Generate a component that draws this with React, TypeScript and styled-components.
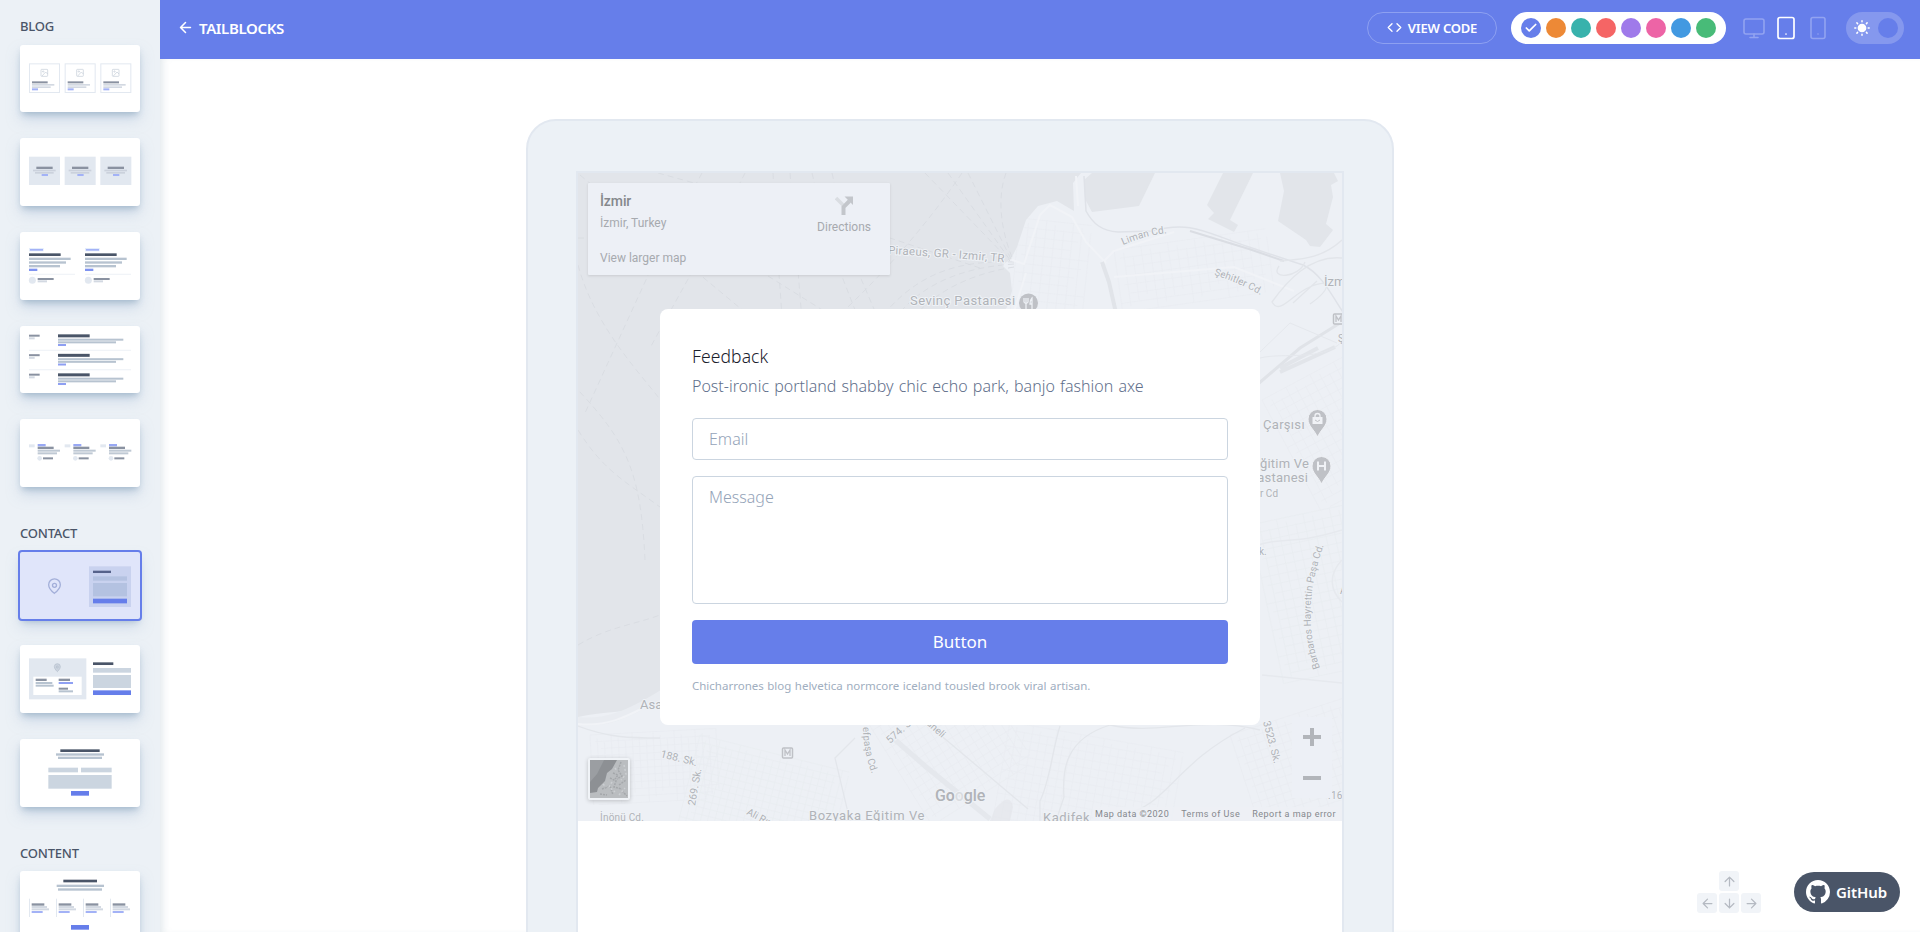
import React from 'react';
import styled, { createGlobalStyle } from 'styled-components';

const GlobalStyle = createGlobalStyle`
  *, *::before, *::after { box-sizing: border-box; }
  body {
    margin: 0;
    height: 932px;
    overflow: hidden;
    background: #fff;
    font-family: "Noto Sans", "Open Sans", sans-serif;
  }
  svg { display: block; }
`;

const DARK = '#4a5568';
const GRAY = '#8a92a1';
const LIGHT = '#b7c3d0';
const PALE = '#d3d9e2';
const FIELD = '#cbd5e0';
const BOX = '#e2e8f0';
const LINE = '#f1f4f8';
const MAIN = '#667eea';
const MAIN_SOFT = '#a3b2f6';

const Page = styled.div`
  display: flex;
  height: 932px;
  overflow: hidden;
`;

/* ---------- sidebar ---------- */

const Sidebar = styled.aside`
  flex: 0 0 160px;
  height: 932px;
  padding: 16.2px 20px 0;
  background: #ecf1f6;
  overflow: hidden;
`;

const Group = styled.section`
  & + & {
    padding-top: 10px;
  }
`;

const GroupTitle = styled.h2`
  margin: 0 0 8.5px;
  font-size: 13px;
  line-height: 20px;
  font-weight: 500;
  letter-spacing: -0.2px;
  color: ${DARK};
`;

const BlockButton = styled.button<{ $active?: boolean }>`
  display: block;
  width: 120px;
  height: 67.7px;
  margin: 0 0 26px;
  padding: 0;
  border: 0;
  border-radius: ${p => (p.$active ? '2px' : '3px')};
  background: ${p => (p.$active ? '#e0e5fa' : '#fff')};
  box-shadow: ${p => (p.$active ? `0 0 0 2px ${MAIN}, ` : '')}0 4px 6px -2px rgba(100, 135, 160, 0.42),
    0 8px 14px -1px rgba(170, 190, 218, 0.5);
`;

type Bar = [number, number, number, number, string];

function Bars({ items, dx = 0, dy = 0 }: { items: Bar[]; dx?: number; dy?: number }) {
  return (
    <g transform={`translate(${dx} ${dy})`}>
      {items.map(([x, y, w, h, fill], i) => (
        <rect key={i} x={x} y={y} width={w} height={h} fill={fill} />
      ))}
    </g>
  );
}

function Thumb({ children }: { children: React.ReactNode }) {
  return <svg width="120" height="67.7" viewBox="0 0 360 203">{children}</svg>;
}

const COLS = [27, 134, 241];

const BlogA = () => (
  <Thumb>
    {COLS.map(x => (
      <g key={x}>
        <rect x={x + 1.5} y="56.5" width="90" height="86" fill="none" stroke={BOX} strokeWidth="3" />
        <g transform={`translate(${x + 36} 73)`} fill="none" stroke="#c3ccd7" strokeWidth="2">
          <rect width="20" height="21" rx="2" />
          <circle cx="6.5" cy="6.5" r="2" />
          <path d="M20 14l-6-6L3 20" />
        </g>
        <Bars dx={x} items={[[9, 109, 47, 6, GRAY], [9, 117, 67, 5, PALE], [9, 124, 56, 5, PALE], [9, 130, 18, 6, MAIN_SOFT]]} />
      </g>
    ))}
  </Thumb>
);

const BlogB = () => (
  <Thumb>
    {COLS.map(x => (
      <Bars
        key={x}
        dx={x}
        items={[[0, 56, 93, 85, BOX], [22, 86, 49, 7, GRAY], [12, 95, 68, 5, '#cbd1dc'], [18, 102, 56, 5, '#cbd1dc'], [38, 108, 19, 6, MAIN_SOFT]]}
      />
    ))}
  </Thumb>
);

const BlogC = () => (
  <Thumb>
    {[27, 195].map(x => (
      <g key={x}>
        <Bars
          dx={x}
          items={[
            [0, 48, 44, 10, '#e3ecfb'], [3, 51, 39, 5, MAIN_SOFT], [0, 64, 95, 8, DARK],
            [0, 77, 125, 7, LIGHT], [0, 88, 111, 7, LIGHT], [0, 99, 93, 7, LIGHT],
            [0, 110, 25, 7, '#7f93f0'], [0, 125, 138, 4, LINE], [26, 138, 48, 6, GRAY], [26, 145, 28, 6, PALE],
          ]}
        />
        <circle cx={x + 10} cy="145" r="10.5" fill={BOX} />
      </g>
    ))}
  </Thumb>
);

const BlogD = () => (
  <Thumb>
    {[0, 58.5, 117].map(y => (
      <Bars
        key={y}
        dy={y}
        items={[
          [27, 26, 32, 6, GRAY], [27, 34, 17, 6, PALE], [114, 25, 95, 9, DARK],
          [114, 38, 196, 6, LIGHT], [114, 46, 174, 6, LIGHT], [114, 54, 24, 6, '#8e9ff2'],
        ]}
      />
    ))}
    <Bars items={[[27, 71, 306, 4, LINE], [27, 129, 306, 4, LINE]]} />
  </Thumb>
);

const BlogE = () => (
  <Thumb>
    {COLS.map(x => (
      <g key={x}>
        <Bars
          dx={x}
          items={[
            [0, 76, 17, 9, BOX], [26, 75, 24, 7, '#98a8f4'], [26, 83, 48, 7, GRAY],
            [26, 92, 67, 6, '#bfc9d4'], [26, 100, 58, 6, '#bfc9d4'], [42, 115, 30, 6, GRAY],
          ]}
        />
        <circle cx={x + 32} cy="118" r="7" fill={BOX} />
      </g>
    ))}
  </Thumb>
);

const ContactA = () => (
  <Thumb>
    <g fill="none" stroke="#a3afd9" strokeWidth="4">
      <path d="M121 98c0 12-18 26-18 26S86 110 86 98a17.500 17.500 0 0 1 35 0z" />
      <circle cx="103.500" cy="100" r="6" />
    </g>
    <Bars items={[[207, 43, 126, 122, '#c9d2ef'], [219, 56, 54, 7, '#56628a'], [219, 73, 102, 13, '#b4c2e1'], [219, 93, 102, 40, '#b4c2e1'], [219, 140, 102, 14, MAIN]]} />
  </Thumb>
);

const ContactB = () => (
  <Thumb>
    <Bars items={[[27, 40, 172, 123, BOX], [40, 95, 145, 55, '#fff']]} />
    <path d="M121 65c0 7-9 15-9 15s-9-8-9-15a9 9 0 0 1 18 0z" fill="#ccd4df" stroke="#b3becb" strokeWidth="2" />
    <circle cx="112" cy="66" r="3" fill="none" stroke="#aab6c4" strokeWidth="1.500" />
    <Bars
      items={[
        [47, 101, 33, 7, GRAY], [47, 111, 50, 6, LIGHT], [47, 119, 54, 6, LIGHT],
        [116, 101, 34, 7, GRAY], [116, 111, 43, 6, '#8fa0f3'], [116, 128, 28, 6, GRAY], [116, 136, 43, 6, LIGHT],
        [219, 52, 61, 8, DARK], [219, 69, 114, 14, FIELD], [219, 90, 114, 39, FIELD], [219, 136, 114, 14, MAIN],
      ]}
    />
  </Thumb>
);

const ContactC = () => (
  <Thumb>
    <Bars
      items={[
        [121, 31, 118, 8, DARK], [108, 43, 144, 7, LIGHT], [114, 53, 132, 7, LIGHT],
        [85, 86, 89, 14, FIELD], [183, 86, 92, 14, FIELD], [85, 108, 190, 41, FIELD], [153, 156, 54, 14, MAIN],
      ]}
    />
  </Thumb>
);

const ContentA = () => (
  <Thumb>
    <Bars items={[[130, 26, 101, 8, DARK], [110, 41, 142, 7, LIGHT], [114, 52, 132, 7, LIGHT]]} />
    {[27, 108, 189, 270].map(x => (
      <Bars
        key={x}
        dx={x}
        items={[[0, 83, 3, 55, BOX], [8, 97, 38, 7, GRAY], [8, 105, 46, 6, PALE], [8, 112, 52, 6, PALE], [8, 120, 33, 6, MAIN_SOFT]]}
      />
    ))}
    <Bars items={[[153, 162, 54, 14, MAIN]]} />
  </Thumb>
);

const groups = [
  { title: 'BLOG', blocks: [BlogA, BlogB, BlogC, BlogD, BlogE] },
  { title: 'CONTACT', blocks: [ContactA, ContactB, ContactC] },
  { title: 'CONTENT', blocks: [ContentA] },
];

/* ---------- toolbar ---------- */

const Main = styled.div`
  flex: 1;
  min-width: 0;
  display: flex;
  flex-direction: column;
`;

const Toolbar = styled.header`
  display: flex;
  align-items: center;
  flex: 0 0 59px;
  padding: 0 16px 4px 17px;
  background: ${MAIN};
  color: #fff;
`;

const Brand = styled.button`
  display: flex;
  align-items: center;
  gap: 5px;
  margin-right: auto;
  padding: 0;
  border: 0;
  background: none;
  color: #fff;
  font: 600 15px/20px "Noto Sans", sans-serif;
  letter-spacing: -0.35px;
`;

const CodeButton = styled.button`
  display: flex;
  align-items: center;
  justify-content: center;
  gap: 6px;
  width: 130px;
  height: 32px;
  margin-right: 14px;
  padding: 0;
  border: 1px solid #8da0f1;
  border-radius: 17px;
  background: none;
  color: #fff;
  font: 600 13px/20px "Noto Sans", sans-serif;
  letter-spacing: -0.2px;
`;

const Palette = styled.div`
  display: flex;
  align-items: center;
  justify-content: center;
  gap: 5px;
  width: 215px;
  height: 32px;
  margin-right: 16px;
  border-radius: 17px;
  background: #fff;
`;

const Swatch = styled.button<{ $color: string }>`
  display: grid;
  place-items: center;
  width: 20px;
  height: 20px;
  padding: 0;
  border: 0;
  border-radius: 50%;
  background: ${p => p.$color};
`;

const Devices = styled.div`
  display: flex;
  align-items: center;
  margin-right: 16px;
`;

const DeviceButton = styled.button<{ $active?: boolean; $gap?: number }>`
  display: block;
  margin: 0 0 0 ${p => p.$gap || 0}px;
  padding: 0;
  border: 0;
  background: none;
  color: ${p => (p.$active ? '#fff' : '#92a3f1')};
`;

const ModeSwitch = styled.button`
  display: flex;
  align-items: center;
  justify-content: space-between;
  width: 58px;
  height: 32px;
  padding: 0 6.5px 0 8px;
  border: 0;
  border-radius: 17px;
  background: #8598ee;
`;

const Knob = styled.span`
  width: 20px;
  height: 20px;
  border-radius: 50%;
  background: ${MAIN};
`;

const colors = [MAIN, '#ed8936', '#38b2ac', '#f56565', '#9f7aea', '#ed64a6', '#4299e1', '#48bb78'];

/* ---------- tablet preview ---------- */

const Stage = styled.main`
  flex: 1;
  min-height: 0;
  display: flex;
  justify-content: center;
  align-items: flex-start;
  padding: 60px 0 0;
  overflow: hidden;
  box-shadow: inset 7px 0 8px -5px rgba(95, 130, 150, 0.2);
`;

/* the frame sits on the window centre, so it is pulled back by half the sidebar */
const Tablet = styled.div`
  flex: none;
  width: 868px;
  height: 1100px;
  margin-right: 160px;
  padding: 50px 48px;
  border: 2px solid ${BOX};
  border-radius: 30px;
  background: #ecf1f6;
`;

const Screen = styled.div`
  height: 1000px;
  border: 2px solid ${BOX};
  background: #fff;
`;

const MapSection = styled.section`
  position: relative;
  display: flex;
  justify-content: center;
  align-items: flex-start;
  height: 648px;
  padding-top: 136px;
  background: #edf0f5;
  overflow: hidden;
`;

const MapLayer = styled.div`
  position: absolute;
  inset: 0;

  text {
    font-family: Roboto, sans-serif;
    fill: #b0b3b8;
    stroke: #eff2f6;
    stroke-width: 2px;
    paint-order: stroke;
  }
`;

const PlaceCard = styled.div`
  position: absolute;
  top: 10px;
  left: 10px;
  display: flex;
  justify-content: space-between;
  width: 302px;
  height: 92px;
  padding: 9px 19px 0 12px;
  border-radius: 1px;
  background: #edf0f6;
  box-shadow: 0 1px 3px rgba(0, 0, 0, 0.11);
  color: #a7aaaf;
  font: 12px/18px Roboto, sans-serif;
`;

const PlaceName = styled.div`
  color: #85888c;
  font-size: 14px;
  font-weight: 500;
  letter-spacing: -0.1px;
`;

const PlaceAddress = styled.div`
  margin-top: 4px;
`;

const PlaceLink = styled.div`
  margin-top: 17px;
`;

const Directions = styled.div`
  display: flex;
  flex-direction: column;
  align-items: center;
  gap: 3px;
  padding-top: 4px;
`;

const ZoomBox = styled.div`
  position: absolute;
  right: 10px;
  bottom: 23px;
  display: flex;
  flex-direction: column;
  align-items: center;
  justify-content: space-between;
  width: 40px;
  height: 81px;
  padding: 11px 0;
  background: #edf0f6;
`;

const Satellite = styled.div`
  position: absolute;
  left: 10px;
  bottom: 21px;
  padding: 2px;
  border-radius: 2px;
  background: #f0f3f7;
  box-shadow: 0 1px 4px rgba(0, 0, 0, 0.2);
`;

const Attribution = styled.div`
  position: absolute;
  right: 0;
  bottom: 0;
  display: flex;
  gap: 12px;
  padding: 0 6px 0 2px;
  background: rgba(237, 240, 245, 0.8);
  color: #85888d;
  font: 9px/14px Roboto, sans-serif;
  letter-spacing: 0.48px;
`;

const FormCard = styled.form`
  position: relative;
  display: flex;
  flex-direction: column;
  width: 600px;
  height: 416px;
  padding: 32px;
  border-radius: 8px;
  background: #fff;

  > * {
    flex: none;
  }
`;

const FormTitle = styled.h3`
  margin: 0;
  color: #1a202c;
  font-size: 17.5px;
  font-weight: 300;
  line-height: 30px;
  letter-spacing: 0.1px;
`;

const FormText = styled.p`
  margin: 2px 0 19px;
  color: #5f6f8b;
  font-size: 16px;
  font-weight: 300;
  line-height: 26px;
  word-spacing: 1px;
  white-space: nowrap;
`;

const fieldStyle = `
  display: block;
  width: 100%;
  margin: 0 0 16px;
  padding: 0 16px;
  border: 1px solid #cbd5e0;
  border-radius: 4px;
  background: #fff;
  font-family: "Noto Sans", sans-serif;
  font-size: 16px;
  font-weight: 300;
  resize: none;
  &::placeholder { color: #94a3b8; opacity: 1; }
`;

const Input = styled.input`
  ${fieldStyle}
  height: 42px;
`;

const TextArea = styled.textarea`
  ${fieldStyle}
  height: 128px;
  padding-top: 9px;
`;

const SubmitButton = styled.button`
  height: 43.5px;
  padding: 0;
  border: 0;
  border-radius: 4px;
  background: ${MAIN};
  color: #fff;
  font: 400 17px/28px "Noto Sans", sans-serif;
`;

const Note = styled.p`
  margin: 12px 0 0;
  color: #a0aec0;
  font-size: 11.5px;
  font-weight: 400;
  line-height: 20px;
  word-spacing: 0.5px;
  white-space: nowrap;
`;

/* ---------- floating controls ---------- */

const Floating = styled.div`
  position: fixed;
  right: 20px;
  bottom: 19px;
  display: flex;
  align-items: flex-end;
  gap: 33px;
`;

const Keys = styled.div`
  display: grid;
  grid-template-columns: repeat(3, 20px);
  gap: 2px;
`;

const Key = styled.span<{ $up?: boolean }>`
  display: grid;
  place-items: center;
  grid-column: ${p => (p.$up ? '1 / -1' : 'auto')};
  justify-self: center;
  width: 20px;
  height: 20px;
  border-radius: 3px;
  background: #f1f4f8;
`;

const GithubLink = styled.a`
  display: flex;
  align-items: center;
  gap: 6px;
  width: 106px;
  height: 40px;
  margin-bottom: 1px;
  padding-left: 12px;
  border-radius: 20px;
  background: ${DARK};
  color: #fff;
  font-size: 15px;
  font-weight: 600;
  letter-spacing: -0.1px;
`;

function Arrow({ turn, size = 16, color = '#b5bac2', width = 2 }: { turn: number; size?: number; color?: string; width?: number }) {
  return (
    <svg width={size} height={size} viewBox="0 0 24 24" fill="none" stroke={color} strokeWidth={width} strokeLinecap="round" strokeLinejoin="round">
      <path d="M19 12H5M12 19l-7-7 7-7" transform={`rotate(${turn} 12 12)`} />
    </svg>
  );
}

/* a fan of thin parallel streets, used to fill the built-up parts of the map */
function Streets({ x, y, turn, cols, rows, gap = 9 }: { x: number; y: number; turn: number; cols: number; rows: number; gap?: number }) {
  let d = '';
  for (let i = 0; i <= cols; i++) d += `M${i * gap} ${(i % 3) * 4}V${rows * gap - (i % 4) * 5}`;
  for (let j = 0; j <= rows; j++) d += `M${(j % 3) * 5} ${j * gap}H${cols * gap - (j % 4) * 6}`;
  return <path d={d} transform={`translate(${x} ${y}) rotate(${turn})`} fill="none" stroke="#e9ecf1" strokeWidth="0.7" />;
}

function MapPin({ x, y, children }: { x: number; y: number; children: React.ReactNode }) {
  return (
    <g transform={`translate(${x} ${y})`}>
      <path d="M0 18C-3 11-9.500 7-9.500 0a9.500 9.500 0 0 1 19 0C9.500 7 3 11 0 18z" fill="#bfc1c6" stroke="#f0f2f6" />
      {children}
    </g>
  );
}

function StationBox({ x, y }: { x: number; y: number }) {
  return (
    <g transform={`translate(${x} ${y})`}>
      <rect x="-5" y="-5" width="10" height="10" rx="1" fill="#edf0f5" stroke="#bfc1c6" strokeWidth="1.500" />
      <path d="M-2.500 3v-6L0 1l2.500-4v6" fill="none" stroke="#bfc1c6" strokeWidth="1.300" />
    </g>
  );
}

function MapDrawing() {
  return (
    <svg width="764" height="648" viewBox="578 173 764 648">
      <Streets x={1020} y={218} turn={6} cols={8} rows={11} />
      <Streets x={1114} y={250} turn={-8} cols={17} rows={7} />
      <Streets x={1262} y={400} turn={-28} cols={14} rows={14} />
      <Streets x={1250} y={525} turn={-12} cols={12} rows={18} />
      <Streets x={590} y={735} turn={-3} cols={18} rows={10} gap={7} />
      <Streets x={700} y={735} turn={14} cols={22} rows={14} gap={7} />
      <Streets x={860} y={710} turn={-32} cols={15} rows={17} gap={8} />
      <Streets x={1010} y={722} turn={10} cols={22} rows={14} gap={8} />
      <Streets x={1230} y={735} turn={-18} cols={15} rows={13} gap={8} />

      <g fill="#e2e5ea">
        <path d="M578 173h503l-8 10 1 28-17-10-19 5-12 14-9 27-6 12-9 6 8 8 2 18-5 16-7 11-12 12v270H760l-80 78-20 18-18 10c-20 8-40 5-64 11z" />
        <path d="M1092 173h63l-16 33-47 6-7-13-1-19z" />
        <path d="M1223 173h30l-23 47 8 5-4 7-26-13 6-6-7-8z" />
        <path d="M1280 173h54l4 8-7 4 2 12-7 27 7 6-13 17-10-1-4-6-28-19 6-30z" />
        <path d="M995 809q15-18 18-2l-3 14h-20z" opacity="0.600" />
      </g>

      <path d="M578 721c28 3 48-7 67-17s32-22 58-30" fill="none" stroke="#e9ecf1" strokeWidth="8" />
      <path d="M578 724c28 3 48-7 67-17" fill="none" stroke="#f1f3f7" strokeWidth="2" />

      <g fill="none" stroke="#d8dbe1" strokeWidth="0.9" strokeDasharray="6 4">
        <path d="M580 175l190 158M578 265c18 66 65 110 94 150M702 173l-46 85-71 155M745 173c-25 50-65 120-95 175" />
        <path d="M773 173l4 73 5 70M790 173l9 110 4 50M812 173l17 70 35 90M832 173l18 80 30 70" />
        <path d="M658 173l112 31 120 34 90 30M578 238h12M768 276l120 75M962 173c-42 62-92 115-142 160" />
        <path d="M925 173l85 88M948 173l62 87M968 173l43 86M1006 173c-10 27-4 60 7 87" />
        <path d="M1014 262c-60-2-108 12-150 80M1014 264c-60 4-105 25-132 74M1014 267c-50 8-90 30-112 66" />
        <path d="M578 645c30-18 55-20 82-30M578 430c25 40 45 50 82 77M645 560c-4-90-20-120-67-170" />
      </g>

      <g fill="none" stroke="#f1f3f7" strokeWidth="2">
        <path d="M1012 260l12 4 16-49 10-10 22 12 14 25 20 21M1026 273l-14 45" />
        <path d="M1076 176l2 30M1114 277l120-10 60 24M1100 265l14-14 60-19" />
      </g>
      <path d="M1084 176l2 35c7 13 16 20 32 21l34-1c40-11 54 2 97 16l54 18c24 11 35 46 54 66" fill="none" stroke="#dfe2e8" strokeWidth="1.500" />
      <path d="M1190 231l59 18 35 12" fill="none" stroke="#dadde3" strokeWidth="2" />
      <path d="M1342 240c-22 20-43 19-62 21M1342 258c-32-3-55 23-70 44 8 14 19-8 40-16s18 4-2 18M1279 266c-10 14 20 12 26-4M1293 303l24-22" fill="none" stroke="#e2e5ea" strokeWidth="1.300" />
      <path d="M1102 262l7 20 7 31" fill="none" stroke="#e1e4e9" strokeWidth="4" />
      <path d="M1340 323l-40 25-42 36" fill="none" stroke="#e0e3e8" strokeWidth="3" />
      <path d="M1318 348l-38 20M1335 347l-55 25" fill="none" stroke="#e2e5ea" strokeWidth="4" />
      <path d="M1260 352l30-29 47 20M1260 358c25-6 60 4 82-16" fill="none" stroke="#e5e8ed" />

      <path d="M660 738c-30 0-50 0-82-12M855 738l-20 20 15 63M925 722l103 87M1060 726c-8 25-10 55-20 75v20M1110 725c-45 14-48 45-46 72l-8 24M1110 725c48 11 90-10 150 5M1245 728c-70 35-80 80-120 85" fill="none" stroke="#e3e6eb" strokeWidth="1.300" />
      <path d="M893 738l32 28 65 53" fill="none" stroke="#e5e8ed" strokeWidth="5" />
      <path d="M1258 545c22-8 36 0 84-15M1262 675l80 8M1342 560c-14 15-12 30 0 42" fill="none" stroke="#e6e9ee" strokeWidth="1.500" />

      <defs>
        <path id="piraeus" d="M888 254q60 3 135 10" />
        <path id="liman" d="M1123 245q20-9 45-12" />
        <path id="sehitler" d="M1214 275q24 7 50 22" />
        <path id="barbaros" d="M1320 668q-21-58 5-126" />
        <path id="pasa" d="M863 727q0 24 10 50" />
      </defs>
      <text fontSize="11.500" letterSpacing="0.250"><textPath href="#piraeus">Piraeus, GR - Izmir, TR</textPath></text>
      <text fontSize="10" letterSpacing="0.1"><textPath href="#liman">Liman Cd.</textPath></text>
      <text fontSize="10"><textPath href="#sehitler">Şehitler Cd.</textPath></text>
      <text fontSize="10"><textPath href="#barbaros">Barbaros Hayrettin Paşa Cd.</textPath></text>
      <text fontSize="10"><textPath href="#pasa">efpaşa Cd.</textPath></text>
      <g fontSize="13">
        <text x="910" y="305" letterSpacing="0.450">Sevinç Pastanesi</text>
        <text x="1324" y="286">İzmir</text>
        <text x="1263" y="428.500" letterSpacing="0.3">Çarşısı</text>
        <text x="1309" y="468" textAnchor="end" letterSpacing="0.2">Eğitim Ve</text>
        <text x="1308" y="482" textAnchor="end" letterSpacing="0.2">Hastanesi</text>
        <text x="640" y="709">Asansör</text>
        <text x="809" y="820" letterSpacing="0.550">Bozyaka Eğitim Ve</text>
        <text x="1043" y="822" letterSpacing="0.500">Kadifek</text>
      </g>
      <g fontSize="10">
        <text x="1260" y="497">r Cd</text>
        <text x="1259" y="555">k.</text>
        <text x="1338" y="342">Ş</text>
        <text x="1340" y="594">A</text>
        <text x="600" y="820.500" letterSpacing="0.2">İnönü Cd.</text>
        <text x="1328" y="799" letterSpacing="0.3">.16</text>
        <text transform="translate(660 757) rotate(14)" fontSize="10.500">188. Sk.</text>
        <text transform="translate(695 806) rotate(-80)" fontSize="10.500">269. Sk.</text>
        <text transform="translate(746 814) rotate(28)">Ali Rıza</text>
        <text transform="translate(890 744) rotate(-42)" fontSize="10.500">574. Sk.</text>
        <text transform="translate(926 724) rotate(42)">üneli</text>
        <text transform="translate(1263 722) rotate(75)" fontSize="10.500">3523. Sk.</text>
        <text x="935" y="801" fontSize="16" fontWeight="500" letterSpacing="-0.1">G<tspan fontWeight="600">o</tspan><tspan fillOpacity="0.350">o</tspan>gle</text>
      </g>

      <circle cx="1028.500" cy="303" r="9.500" fill="#bfc1c6" />
      <path d="M1024 298v4q2 3 4 0v-4M1026 298v11M1032 309v-11q-2 2-2 6h2" fill="none" stroke="#edf0f5" strokeWidth="1.300" />
      <MapPin x={1317.500} y={419}>
        <rect x="-5" y="-2" width="10" height="7" fill="#f0f2f6" />
        <path d="M-2.500-2v-1a2.500 2.500 0 0 1 5 0v1" fill="none" stroke="#f0f2f6" strokeWidth="1.300" />
        <path d="M-2.500 1q2.500 3 5 0" fill="none" stroke="#bfc1c6" />
      </MapPin>
      <MapPin x={1321.500} y={466}>
        <path d="M-3.500-4.500v9M3.500-4.500v9M-3.500 0h7" stroke="#f0f2f6" strokeWidth="2" />
      </MapPin>
      <StationBox x={787.500} y={753} />
      <StationBox x={1338.500} y={319} />
    </svg>
  );
}

function App() {
  return (
    <Page>
      <GlobalStyle />
      <Sidebar>
        {groups.map(group => (
          <Group key={group.title}>
            <GroupTitle>{group.title}</GroupTitle>
            {group.blocks.map((Block, i) => (
              <BlockButton key={i} $active={Block === ContactA}>
                <Block />
              </BlockButton>
            ))}
          </Group>
        ))}
      </Sidebar>

      <Main>
        <Toolbar>
          <Brand>
            <Arrow turn={0} size={17} color="#fff" width={2.2} />
            TAILBLOCKS
          </Brand>
          <CodeButton>
            <svg width="15" height="15" viewBox="0 0 24 24" fill="none" stroke="currentColor" strokeWidth="2.200" strokeLinecap="round" strokeLinejoin="round">
              <path d="M16 18l6-6-6-6M8 6l-6 6 6 6" />
            </svg>
            VIEW CODE
          </CodeButton>
          <Palette>
            {colors.map((color, i) => (
              <Swatch key={color} $color={color}>
                {i === 0 && (
                  <svg width="14" height="14" viewBox="0 0 24 24" fill="none" stroke="#fff" strokeWidth="3" strokeLinecap="round" strokeLinejoin="round">
                    <path d="M20 6L9 17l-5-5" />
                  </svg>
                )}
              </Swatch>
            ))}
          </Palette>
          <Devices>
            <DeviceButton>
              <svg width="24" height="24" viewBox="0 0 24 24" fill="none" stroke="currentColor" strokeWidth="1.600" strokeLinecap="round" strokeLinejoin="round">
                <rect x="2" y="3" width="20" height="15" rx="2" />
                <path d="M8 21.500h8M12 18v3.500" />
              </svg>
            </DeviceButton>
            <DeviceButton $active $gap={8}>
              <svg width="24" height="24" viewBox="0 0 24 24" fill="none" stroke="currentColor" strokeWidth="1.700" strokeLinecap="round" strokeLinejoin="round">
                <rect x="4" y="1.500" width="16" height="21" rx="2" />
                <path d="M12 18v.01" />
              </svg>
            </DeviceButton>
            <DeviceButton $gap={8}>
              <svg width="24" height="24" viewBox="0 0 24 24" fill="none" stroke="currentColor" strokeWidth="1.600" strokeLinecap="round" strokeLinejoin="round">
                <rect x="5" y="1.500" width="14" height="21" rx="2" />
                <path d="M12 18v.01" />
              </svg>
            </DeviceButton>
          </Devices>
          <ModeSwitch>
            <svg width="16" height="16" viewBox="0 0 16 16" stroke="#fff" strokeWidth="1.500" strokeLinecap="round">
              <circle cx="8" cy="8" r="3.600" fill="#fff" />
              <path d="M8 .8v1M8 14.200v1M.8 8h1M14.200 8h1M2.900 2.900l.7.7M12.400 12.400l.7.7M2.900 13.100l.7-.7M12.400 3.600l.7-.7" />
            </svg>
            <Knob />
          </ModeSwitch>
        </Toolbar>

        <Stage>
          <Tablet>
            <Screen>
              <MapSection>
                <MapLayer>
                  <MapDrawing />
                </MapLayer>
                <PlaceCard>
                  <div>
                    <PlaceName>İzmir</PlaceName>
                    <PlaceAddress>İzmir, Turkey</PlaceAddress>
                    <PlaceLink>View larger map</PlaceLink>
                  </div>
                  <Directions>
                    <svg width="18" height="19" viewBox="0 0 18 19" fill="none">
                      <path d="M1 2l7 7" stroke="#dadde2" strokeWidth="3.500" />
                      <path d="M8.500 19v-8l6-6" stroke="#c3c6cb" strokeWidth="4" />
                      <path d="M9.500 0.500H18V9z" fill="#c3c6cb" />
                    </svg>
                    Directions
                  </Directions>
                </PlaceCard>
                <Satellite>
                  <svg width="38" height="38" viewBox="0 0 38 38">
                    <path d="M0 0h38v38H0z" fill="#babdc0" />
                    <path d="M0 0h27l-5 9-5 4-2 8-7 7-1 4-7 1z" fill="#8d9094" />
                    <path d="M0 0h14l-7 14-7 8z" fill="#9b9ea2" />
                    <path d="M31 2l-3 8 4 6-5 3M20 18l6 3-2 6 8 2M12 29l8-3 3 9M29 25l7-5M23 13l5 2-3 4M10 34l7 1M32 31l5 5" fill="none" stroke="#a4a7aa" strokeWidth="1.500" strokeDasharray="2 1" />
                    <path d="M34 5l2 9-5 6M22 22l-3 5 6 5M13 24l3 3M29 35l6-7M25 8l2 3" fill="none" stroke="#cccfd2" strokeWidth="1.500" strokeDasharray="2 2" />
                  </svg>
                </Satellite>
                <ZoomBox>
                  <svg width="18" height="18" viewBox="0 0 18 18" stroke="#b2b5ba" strokeWidth="4"><path d="M9 0v18M0 9h18" /></svg>
                  <svg width="18" height="18" viewBox="0 0 18 18" stroke="#b2b5ba" strokeWidth="4"><path d="M0 9h18" /></svg>
                </ZoomBox>
                <Attribution>
                  <span>Map data ©2020</span>
                  <span>Terms of Use</span>
                  <span>Report a map error</span>
                </Attribution>
                <FormCard>
                  <FormTitle>Feedback</FormTitle>
                  <FormText>Post-ironic portland shabby chic echo park, banjo fashion axe</FormText>
                  <Input placeholder="Email" />
                  <TextArea placeholder="Message" />
                  <SubmitButton type="button">Button</SubmitButton>
                  <Note>Chicharrones blog helvetica normcore iceland tousled brook viral artisan.</Note>
                </FormCard>
              </MapSection>
            </Screen>
          </Tablet>
        </Stage>
      </Main>

      <Floating>
        <Keys>
          <Key $up><Arrow turn={90} size={15} /></Key>
          <Key><Arrow turn={0} size={15} /></Key>
          <Key><Arrow turn={-90} size={15} /></Key>
          <Key><Arrow turn={180} size={15} /></Key>
        </Keys>
        <GithubLink>
          <svg width="24" height="24" viewBox="0 0 24 24" fill="#fff">
            <path d="M12 0C5.370 0 0 5.370 0 12c0 5.310 3.435 9.795 8.205 11.385.6.105.825-.255.825-.57 0-.285-.015-1.230-.015-2.235-3.015.555-3.795-.735-4.035-1.410-.135-.345-.72-1.410-1.230-1.695-.42-.225-1.020-.78-.015-.795.945-.015 1.620.87 1.845 1.230 1.080 1.815 2.805 1.305 3.495.99.105-.78.42-1.305.765-1.605-2.670-.3-5.460-1.335-5.460-5.925 0-1.305.465-2.385 1.230-3.225-.12-.3-.54-1.530.12-3.180 0 0 1.005-.315 3.300 1.230.96-.27 1.980-.405 3-.405s2.040.135 3 .405c2.295-1.560 3.300-1.230 3.300-1.230.66 1.650.24 2.880.12 3.180.765.84 1.230 1.905 1.230 3.225 0 4.605-2.805 5.625-5.475 5.925.435.375.81 1.095.81 2.220 0 1.605-.015 2.895-.015 3.300 0 .315.225.69.825.57A12.020 12.020 0 0 0 24 12c0-6.630-5.370-12-12-12z" />
          </svg>
          GitHub
        </GithubLink>
      </Floating>
    </Page>
  );
}

export default App;
